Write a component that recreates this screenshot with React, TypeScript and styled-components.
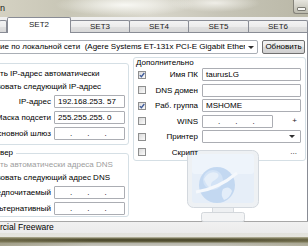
import styled, { createGlobalStyle } from "styled-components";

const GlobalStyle = createGlobalStyle`
  html, body {
    margin: 0;
    padding: 0;
    background: #fff;
    overflow: hidden;
  }
  * {
    box-sizing: border-box;
  }
`;

const FONT = `"Liberation Sans", Arial, sans-serif`;

const tabs = [
  { label: "", width: 8 },
  { label: "SET2", width: 64, active: true },
  { label: "SET3", width: 60 },
  { label: "SET4", width: 60 },
  { label: "SET5", width: 61 },
  { label: "SET6", width: 60 },
];

const extras = [
  { label: "Имя ПК", checked: true, kind: "text", value: "taurusLG" },
  { label: "DNS домен", checked: false, kind: "text", value: "" },
  { label: "Раб. группа", checked: true, kind: "text", value: "MSHOME" },
  { label: "WINS", checked: false, kind: "wins", value: "" },
  { label: "Принтер", checked: false, kind: "combo", value: "" },
  { label: "Скрипт", checked: false, kind: "dots", value: "" },
];

const IpField = ({ value }: { value?: string }) => (
  <Field>
    {value ? (
      <IpText>{value}</IpText>
    ) : (
      <EmptyDots>
        <span>.</span>
        <span>.</span>
        <span>.</span>
      </EmptyDots>
    )}
  </Field>
);

const CheckBox = ({ checked }: { checked: boolean }) => (
  <Check>
    {checked && (
      <svg width="6" height="6" viewBox="0 0 6 6">
        <path d="M0.8 3.1 L2.4 4.7 L5.3 1.0" fill="none" stroke="#3d5a99" strokeWidth="1.3" />
      </svg>
    )}
  </Check>
);

// faded "network computer" picture behind the options box
const Monitor = () => (
  <Watermark>
    <svg width="74" height="74" viewBox="0 0 74 74">
      <rect x="26.5" y="56.5" width="21" height="8" fill="#eef0f2" stroke="#d6dadf" />
      <rect x="15.5" y="62.5" width="43" height="9" rx="2" fill="#f3f4f5" stroke="#d3d7db" />
      <rect x="1.5" y="0.5" width="71" height="57" rx="6" fill="#eef1f4" stroke="#d3d8de" />
      <rect x="6" y="4" width="62" height="49" rx="3" fill="#e6eef8" />
      <rect x="6" y="4" width="62" height="20" rx="3" fill="#eef4fb" />
      <circle cx="31" cy="35" r="18" fill="#c3d8f1" />
      <circle cx="27" cy="30" r="10" fill="#d3e3f6" />
      <path d="M18 29 q5 -9 13 -6 q4 3 -2 7 q-5 2 -4 7 q-3 2 -7 -8z" fill="#e6eff9" />
      <path d="M37 39 q6 -4 9 2 q-2 7 -8 9 q-4 -5 -1 -11z" fill="#e3edf9" />
      <path d="M10 42 q22 -3 41 -19" fill="none" stroke="#f5f8fc" strokeWidth="3" />
    </svg>
  </Watermark>
);

const App = () => {
  return (
    <Window>
      <GlobalStyle />
      <TitleBar>
        <TitleText>n</TitleText>
        <CaptionButton>
          <MinGlyph />
        </CaptionButton>
      </TitleBar>

      <TabStrip>
        {tabs.map((t, i) => (
          <Tab key={i} $w={t.width} $active={t.active}>
            {t.label}
          </Tab>
        ))}
      </TabStrip>

      <Page>
        <Monitor />
        <Toolbar>
          <Combo>
            <ComboText>ие по локальной сети  (Agere Systems ET-131x PCI-E Gigabit Ethernet Controller)</ComboText>
            <ComboArrow />
          </Combo>
          <PushButton>Обновить</PushButton>
        </Toolbar>

        <Columns>
          <LeftColumn>
            <IpGroup>
              <RadioLine>ть IP-адрес автоматически</RadioLine>
              <RadioLine $shift={-3}>зовать следующий IP-адрес</RadioLine>
              <FieldRow>
                <FieldLabel><span>IP-адрес</span></FieldLabel>
                <IpField value="192.168.253. 57" />
              </FieldRow>
              <FieldRow>
                <FieldLabel><span>Маска подсети</span></FieldLabel>
                <IpField value="255.255.255. 0" />
              </FieldRow>
              <FieldRow>
                <FieldLabel><span>Основной шлюз</span></FieldLabel>
                <IpField />
              </FieldRow>
            </IpGroup>

            <DnsGroup>
              <GroupLegend>вер</GroupLegend>
              <RadioLine $muted>ть автоматически адреса DNS</RadioLine>
              <RadioLine $shift={-3}>зовать следующий адрес DNS</RadioLine>
              <FieldRow>
                <FieldLabel><span>Предпочитаемый</span></FieldLabel>
                <IpField />
              </FieldRow>
              <FieldRow>
                <FieldLabel><span>Альтернативный</span></FieldLabel>
                <IpField />
              </FieldRow>
            </DnsGroup>
          </LeftColumn>

          <ExtraBox>
            <ExtraTitle>Дополнительно</ExtraTitle>
            {extras.map((e) => (
              <ExtraRow key={e.label}>
                <CheckBox checked={e.checked} />
                <ExtraLabel>{e.label}</ExtraLabel>
                {e.kind === "text" && <Field>{e.value}</Field>}
                {e.kind === "wins" && (
                  <Inline>
                    <Field $w={71}>
                      <EmptyDots>
                        <span>.</span>
                        <span>.</span>
                        <span>.</span>
                      </EmptyDots>
                    </Field>
                    <SideGlyph>+</SideGlyph>
                  </Inline>
                )}
                {e.kind === "combo" && (
                  <Field $combo>
                    <ComboArrow />
                  </Field>
                )}
                {e.kind === "dots" && (
                  <Inline>
                    <SideGlyph>...</SideGlyph>
                  </Inline>
                )}
              </ExtraRow>
            ))}
          </ExtraBox>
        </Columns>
      </Page>

      <StatusBar>rcial Freeware</StatusBar>
      <FrameBottom />
    </Window>
  );
};

const Window = styled.div`
  width: 308px;
  height: 246px;
  display: flex;
  flex-direction: column;
  overflow: hidden;
  font-family: ${FONT};
  font-size: 8px;
  color: #000;
  background: #fff;
`;

const TitleBar = styled.div`
  height: 17px;
  flex: none;
  display: flex;
  justify-content: space-between;
  align-items: flex-start;
  background:
    radial-gradient(ellipse 70px 11px at 125px 5px, rgba(250, 250, 246, 0.95), rgba(250, 250, 246, 0)),
    radial-gradient(ellipse 45px 9px at 215px 3px, rgba(246, 245, 240, 0.85), rgba(246, 245, 240, 0)),
    linear-gradient(90deg, #d4d1c2 0%, #c8c6b6 22%, #d9d7cc 48%, #c6c4b6 72%, #bab8a7 100%);
`;

const TitleText = styled.span`
  font-size: 9px;
  line-height: 9px;
  margin-top: 4px;
  color: #1b1b1b;
`;

const CaptionButton = styled.div`
  width: 15px;
  height: 14px;
  border: 1px solid #85837a;
  border-top: none;
  border-right: none;
  border-radius: 0 0 0 3px;
  background: linear-gradient(#e6e5de, #bcbbae);
  display: flex;
  align-items: flex-end;
  justify-content: center;
  padding-bottom: 2px;
`;

const MinGlyph = styled.div`
  width: 9px;
  height: 4px;
  border: 1px solid #7c7b74;
  border-radius: 1px;
  background: #f7f7f4;
`;

const TabStrip = styled.div`
  height: 16px;
  flex: none;
  display: flex;
  align-items: flex-end;
  background: #f0f0f0;
  border-bottom: 1px solid #898c95;
  position: relative;
  z-index: 3;
`;

const Tab = styled.div<{ $w: number; $active?: boolean }>`
  width: ${(p) => p.$w}px;
  height: ${(p) => (p.$active ? 16 : 12)}px;
  margin-left: ${(p) => (p.$active ? 0 : -1)}px;
  margin-bottom: ${(p) => (p.$active ? -1 : 0)}px;
  flex: none;
  border: 1px solid #898c95;
  border-bottom: none;
  border-radius: 2px 2px 0 0;
  background: ${(p) =>
    p.$active ? "#fff" : "linear-gradient(#f4f4f4 0%, #ececec 50%, #e0e0e0 51%, #d8d8d8 100%)"};
  display: flex;
  align-items: center;
  justify-content: center;
  line-height: 10px;
  padding-bottom: ${(p) => (p.$active ? 2 : 0)}px;
  color: #1a1a1a;
  position: relative;
  z-index: ${(p) => (p.$active ? 2 : 1)};
`;

const Page = styled.div`
  flex: 1;
  position: relative;
  display: flex;
  flex-direction: column;
  background: #fff;
  border-right: 1px solid #898c95;
  min-height: 0;
`;

const Watermark = styled.div`
  position: absolute;
  left: 186px;
  top: 117px;
  width: 74px;
  height: 74px;
  z-index: 1;
  svg {
    display: block;
  }
`;

const Toolbar = styled.div`
  height: 14px;
  margin: 7px 2px 0 -5px;
  display: flex;
  gap: 4px;
  flex: none;
`;

const Combo = styled.div`
  flex: 1;
  min-width: 0;
  display: flex;
  align-items: center;
  border: 1px solid #a9aeb5;
  border-radius: 2px;
  background: #fff;
  padding-left: 4px;
`;

const ComboText = styled.span`
  flex: 1;
  min-width: 0;
  overflow: hidden;
  white-space: pre;
  line-height: 12px;
`;

const ComboArrow = styled.span`
  width: 12px;
  height: 100%;
  flex: none;
  display: flex;
  align-items: center;
  justify-content: center;
  &::before {
    content: "";
    border-left: 3px solid transparent;
    border-right: 3px solid transparent;
    border-top: 3px solid #2f2f2f;
  }
`;

const PushButton = styled.button`
  width: 43px;
  flex: none;
  padding: 0;
  font: inherit;
  color: #000;
  border: 1px solid #707070;
  border-radius: 2px;
  background: linear-gradient(#f2f2f2 0%, #ebebeb 45%, #dddddd 50%, #cfcfcf 100%);
  line-height: 12px;
`;

const Columns = styled.div`
  flex: 1;
  display: flex;
  align-items: flex-start;
`;

const LeftColumn = styled.div`
  width: 133px;
  margin-left: -4px;
  flex: none;
  display: flex;
  flex-direction: column;
`;

const IpGroup = styled.div`
  margin-top: 9px;
  border: 1px solid #d5dfe5;
  border-radius: 3px;
  padding: 3px 2px 3px 3px;
`;

const DnsGroup = styled.fieldset`
  margin: 3px 0 0 0;
  min-width: 0;
  border: 1px solid #d5dfe5;
  border-radius: 3px;
  padding: 0 2px 0 3px;
`;

const GroupLegend = styled.legend`
  padding: 0 3px 0 0;
  font-size: 8px;
  line-height: 10px;
`;

const RadioLine = styled.div<{ $muted?: boolean; $shift?: number }>`
  height: 13px;
  line-height: 13px;
  white-space: nowrap;
  margin-left: ${(p) => p.$shift ?? 0}px;
  color: ${(p) => (p.$muted ? "#9d9d9d" : "#000")};
`;

const FieldRow = styled.div`
  height: 16px;
  display: grid;
  grid-template-columns: 51px 71px;
  column-gap: 3px;
  align-items: center;
`;

const FieldLabel = styled.div`
  display: flex;
  justify-content: flex-end;
  white-space: nowrap;
  min-width: 0;
`;

const Field = styled.div<{ $w?: number; $combo?: boolean }>`
  height: 13px;
  width: ${(p) => (p.$w ? `${p.$w}px` : "auto")};
  border: 1px solid #abadb3;
  border-radius: 1px;
  background: #fff;
  padding-left: 3px;
  line-height: 11px;
  white-space: nowrap;
  overflow: hidden;
  display: flex;
  align-items: center;
  justify-content: ${(p) => (p.$combo ? "flex-end" : "flex-start")};
  padding-right: ${(p) => (p.$combo ? 2 : 0)}px;
`;

const IpText = styled.span`
  white-space: pre;
`;

const EmptyDots = styled.span`
  display: flex;
  gap: 15px;
  padding-left: 12px;
`;

const ExtraBox = styled.div`
  margin: 3px 0 0 4px;
  width: 173px;
  flex: none;
  border: 1px solid #d5dfe5;
  border-radius: 3px;
  padding: 0 3px 0 4px;
`;

const ExtraTitle = styled.div`
  height: 9px;
  line-height: 9px;
  margin-left: -2px;
  white-space: nowrap;
  position: relative;
  z-index: 2;
`;

const ExtraRow = styled.div`
  height: 15.5px;
  display: grid;
  grid-template-columns: 8px 56px 99px;
  align-items: center;
  position: relative;
  z-index: 2;
`;

const Check = styled.div`
  width: 8px;
  height: 8px;
  border: 1px solid #8e8f8f;
  background: linear-gradient(135deg, #dadada, #fbfbfb);
  display: flex;
  align-items: center;
  justify-content: center;
`;

const ExtraLabel = styled.div`
  text-align: right;
  padding-right: 4px;
  white-space: nowrap;
`;

const Inline = styled.div`
  display: flex;
  align-items: center;
  height: 13px;
`;

const SideGlyph = styled.span`
  flex: 1;
  text-align: right;
  padding-right: 4px;
  line-height: 10px;
  color: #222;
`;

const StatusBar = styled.div`
  height: 16px;
  flex: none;
  border-top: 1px solid #a7a7a7;
  background: linear-gradient(#f1f1f1, #ebebeb 72%, #e2e2dc 73%, #e6e5df);
  line-height: 10px;
  padding-top: 0;
  font-size: 8.5px;
  white-space: nowrap;
`;

const FrameBottom = styled.div`
  height: 9px;
  flex: none;
  background:
    linear-gradient(90deg, rgba(140, 135, 100, 0.5), rgba(0, 0, 0, 0) 30%, rgba(0, 0, 0, 0) 70%, rgba(150, 145, 110, 0.4)),
    linear-gradient(#c9c7b3 0px, #5a5736 2px, #47442a 3px, #6c6949 5px, #b4b3a7 6px, #c7c6be 9px);
`;

export default App;
